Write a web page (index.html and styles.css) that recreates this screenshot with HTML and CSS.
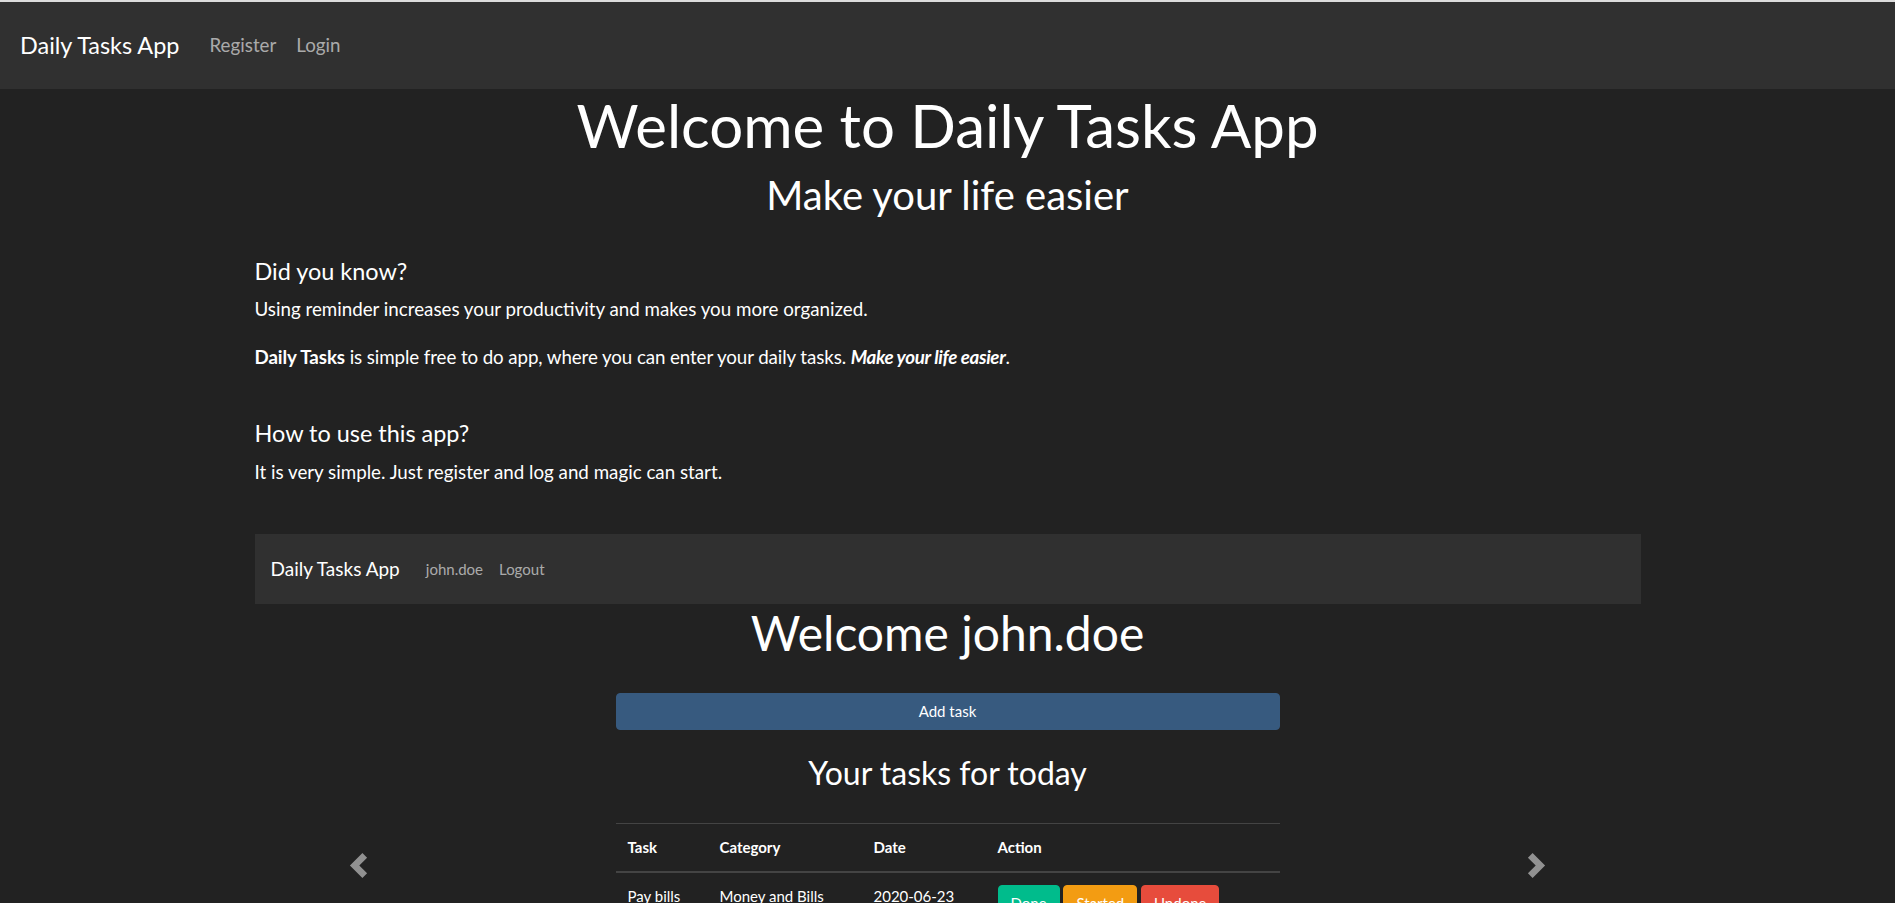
FILE: index.html
```html
<!DOCTYPE html>
<html lang="en">
<head>
<meta charset="utf-8">
<title>Daily Tasks App</title>
<link rel="stylesheet" href="styles.css">
</head>
<body>
<div class="topline"></div>
<nav class="navbar">
  <a class="brand" href="#">Daily Tasks App</a>
  <ul class="nav">
    <li><a class="nav-link" href="#">Register</a></li>
    <li><a class="nav-link" href="#">Login</a></li>
  </ul>
</nav>

<main class="container">
  <h1 class="title">Welcome to Daily Tasks App</h1>
  <h3 class="subtitle">Make your life easier</h3>

  <section class="info">
    <h5 class="info-head">Did you know?</h5>
    <p class="info-text">Using reminder increases your productivity and makes you more organized.</p>
    <p class="info-text info-tight"><strong>Daily Tasks</strong> is simple free to do app, where you can enter your daily tasks. <strong><em class="em-tight">Make your life easier</em></strong>.</p>
  </section>

  <section class="info">
    <h5 class="info-head">How to use this app?</h5>
    <p class="info-text">It is very simple. Just register and log and magic can start.</p>
  </section>

  <div class="carousel">
    <div class="slide">
      <nav class="inner-navbar">
        <a class="inner-brand" href="#">Daily Tasks App</a>
        <ul class="nav">
          <li><a class="inner-link" href="#">john.doe</a></li>
          <li><a class="inner-link" href="#">Logout</a></li>
        </ul>
      </nav>
      <div class="inner-body">
        <h1 class="inner-title">Welcome john.doe</h1>
        <button class="btn-add" type="button">Add task</button>
        <h3 class="inner-sub">Your tasks for today</h3>
        <table class="tasks">
          <thead>
            <tr>
              <th class="c-task">Task</th>
              <th class="c-cat">Category</th>
              <th class="c-date">Date</th>
              <th class="c-act">Action</th>
            </tr>
          </thead>
          <tbody>
            <tr>
              <td>Pay bills</td>
              <td>Money and Bills</td>
              <td>2020-06-23</td>
              <td><button class="btn btn-done">Done</button> <button class="btn btn-started">Started</button> <button class="btn btn-undone">Undone</button></td>
            </tr>
          </tbody>
        </table>
      </div>
    </div>
    <a class="ctrl ctrl-prev" href="#" aria-label="Previous">
      <svg class="ctrl-icon" viewBox="0 0 8 8" width="25" height="25"><path d="M5.25 0l-4 4 4 4 1.5-1.5L4.25 4l2.5-2.5L5.25 0z" fill="#fff"/></svg>
    </a>
    <a class="ctrl ctrl-next" href="#" aria-label="Next">
      <svg class="ctrl-icon" viewBox="0 0 8 8" width="25" height="25"><path d="M2.75 0l-1.5 1.5L3.75 4l-2.5 2.5L2.75 8l4-4-4-4z" fill="#fff"/></svg>
    </a>
  </div>
</main>
</body>
</html>
```

FILE: styles.css
```css
* { box-sizing: border-box; }

html, body {
  margin: 0;
  padding: 0;
}

body {
  background: #222222;
  color: #ffffff;
  font-family: Lato, "Open Sans", "Liberation Sans", sans-serif;
  font-size: 18.75px;
  line-height: 1.5;
}

a { text-decoration: none; }

.topline {
  height: 2px;
  background: #dcdcdc;
}

.navbar {
  display: flex;
  align-items: center;
  height: 87px;
  padding: 0 20px;
  background: #303030;
}

.brand {
  color: #ffffff;
  font-size: 23.44px;
  line-height: 1.5;
  margin-right: 20px;
}

.nav {
  display: flex;
  list-style: none;
  margin: 0;
  padding: 0;
}

.nav-link {
  display: block;
  padding: 0 10px;
  color: rgba(255, 255, 255, 0.6);
  font-size: 18.75px;
}

.container {
  width: 1386px;
  margin: 0 auto;
}

.title {
  margin: 0 0 10px;
  font-size: 60px;
  font-weight: 400;
  line-height: 1.2;
  text-align: center;
}

.subtitle {
  margin: 0 0 10px;
  font-size: 40px;
  font-weight: 400;
  line-height: 1.2;
  text-align: center;
}

.info {
  padding-top: 28px;
}

.info-head {
  margin: 0 0 10px;
  font-size: 23.44px;
  font-weight: 400;
  line-height: 1.2;
}

.info-text {
  margin: 0 0 20px;
}

.info-tight {
  letter-spacing: -0.1px;
}

.em-tight {
  letter-spacing: -0.35px;
}

.carousel {
  position: relative;
  margin-top: 48px;
  height: 664px;
  overflow: hidden;
}

.slide {
  font-size: 15px;
  line-height: 1.5;
}

.inner-navbar {
  display: flex;
  align-items: center;
  padding: 16px;
  background: #303030;
}

.inner-brand {
  color: #ffffff;
  font-size: 19px;
  line-height: 1.5;
  padding: 5px 0;
  margin-right: 18px;
}

.inner-link {
  display: block;
  padding: 8px;
  color: rgba(255, 255, 255, 0.6);
  font-size: 15px;
}

.inner-body {
  width: 664px;
  margin: 0 auto;
}

.inner-title {
  margin: 0;
  font-size: 48px;
  font-weight: 400;
  line-height: 1.2;
  text-align: center;
}

.btn-add {
  display: block;
  width: 100%;
  margin-top: 31.5px;
  padding: 6px 12px;
  border: 1px solid #375a7f;
  border-radius: 4px;
  background: #375a7f;
  color: #ffffff;
  font-family: inherit;
  font-size: 15px;
  line-height: 1.5;
}

.inner-sub {
  margin: 24.5px 0 0;
  font-size: 32px;
  font-weight: 400;
  line-height: 1.2;
  text-align: center;
}

.tasks {
  width: 100%;
  margin-top: 30.5px;
  border-collapse: collapse;
  color: #ffffff;
}

.tasks th,
.tasks td {
  padding: 12px;
  border-top: 1px solid #444444;
  text-align: left;
  vertical-align: top;
}

.tasks thead th {
  border-bottom: 2px solid #444444;
  font-weight: 700;
  vertical-align: bottom;
}

.c-task { width: 92px; }
.c-cat { width: 154px; }
.c-date { width: 124px; }
.c-act { width: 294px; }

.btn {
  display: inline-block;
  padding: 6px 12px;
  border: 1px solid transparent;
  border-radius: 4px;
  color: #ffffff;
  font-family: inherit;
  font-size: 15px;
  line-height: 1.5;
}

.btn-done { background: #00bc8c; border-color: #00bc8c; }
.btn-started { background: #f39c12; border-color: #f39c12; }
.btn-undone { background: #e74c3c; border-color: #e74c3c; }

.ctrl {
  position: absolute;
  top: 0;
  bottom: 0;
  width: 15%;
  display: flex;
  align-items: center;
  justify-content: center;
  opacity: 0.5;
}

.ctrl-prev { left: 0; }
.ctrl-next { right: 0; }

.ctrl-icon { display: block; }
```
